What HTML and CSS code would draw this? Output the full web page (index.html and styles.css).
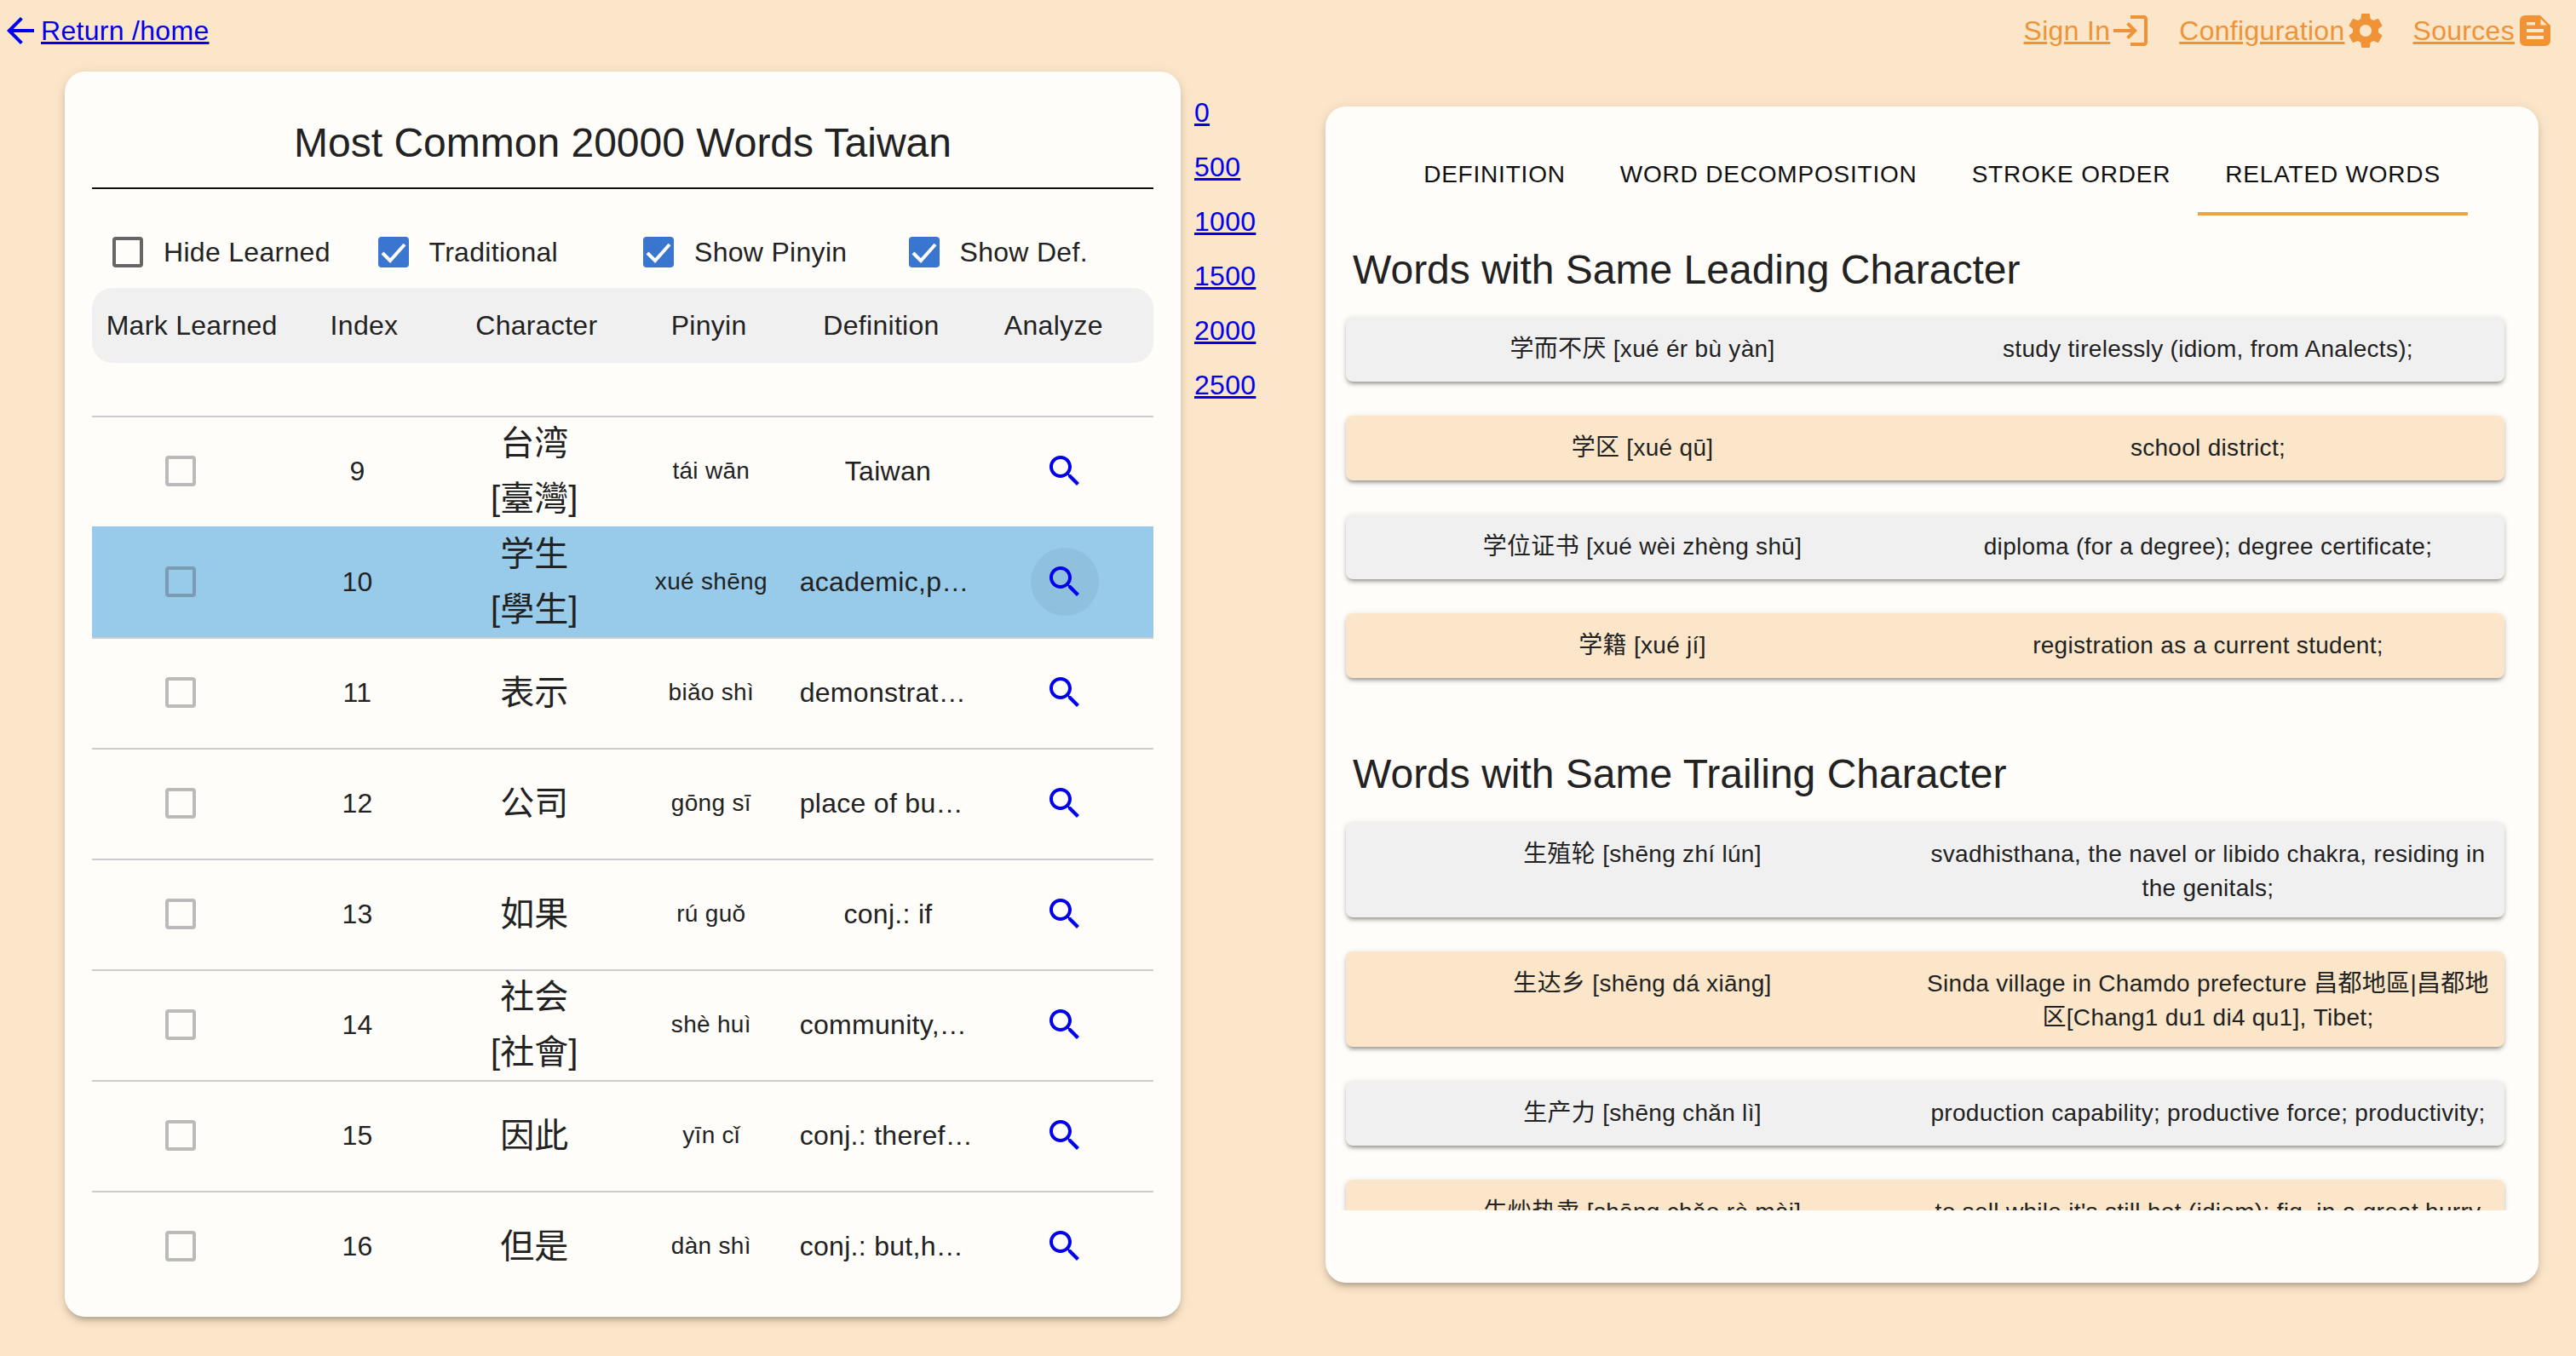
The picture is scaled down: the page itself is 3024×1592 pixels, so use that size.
FILE: index.html
```html
<!DOCTYPE html>
<html>
<head>
<meta charset="utf-8">
<title>Most Common 20000 Words Taiwan</title>
<link rel="stylesheet" href="styles.css">
</head>
<body>
<div class="topbar">
  <div class="back">
    <svg class="icon" viewBox="0 0 24 24"><path d="M20 11H7.830l5.590-5.590L12 4l-8 8 8 8 1.410-1.410L7.830 13H20v-2z"/></svg>
    <a href="#">Return /home</a>
  </div>
  <div class="nav">
    <div class="nav-item signin">
      <a href="#">Sign In</a>
      <svg class="icon" viewBox="0 0 24 24"><path d="M11 7L9.600 8.400l2.600 2.600H2v2h10.200l-2.600 2.600L11 17l5-5-5-5zm9 12h-8v2h8c1.100 0 2-.9 2-2V5c0-1.100-.9-2-2-2h-8v2h8v14z"/></svg>
    </div>
    <div class="nav-item config">
      <a href="#">Configuration</a>
      <svg class="icon" viewBox="0 0 24 24"><path d="M19.430 12.980c.04-.32.07-.64.07-.98s-.03-.66-.07-.98l2.110-1.650c.19-.15.24-.42.12-.64l-2-3.460c-.12-.22-.39-.3-.61-.22l-2.490 1c-.52-.4-1.080-.73-1.690-.98l-.38-2.650C14.460 2.180 14.250 2 14 2h-4c-.25 0-.46.18-.49.42l-.38 2.650c-.61.25-1.170.59-1.690.98l-2.490-1c-.23-.09-.49 0-.61.22l-2 3.460c-.13.22-.07.49.12.64l2.110 1.650c-.04.32-.07.65-.07.98s.03.66.07.98l-2.110 1.650c-.19.15-.24.42-.12.64l2 3.460c.12.22.39.3.61.22l2.490-1c.52.4 1.080.73 1.690.98l.38 2.650c.03.24.24.42.49.42h4c.25 0 .46-.18.49-.42l.38-2.650c.61-.25 1.170-.59 1.690-.98l2.490 1c.23.09.49 0 .61-.22l2-3.460c.12-.22.07-.49-.12-.64l-2.110-1.650zM12 15.500c-1.930 0-3.500-1.570-3.500-3.500s1.570-3.500 3.500-3.500 3.500 1.570 3.500 3.500-1.570 3.500-3.500 3.500z"/></svg>
    </div>
    <div class="nav-item">
      <a href="#">Sources</a>
      <svg class="doc" viewBox="0 0 36 36"><path fill-rule="evenodd" d="M6 0h18l12 12v18a6 6 0 0 1-6 6H6a6 6 0 0 1-6-6V6a6 6 0 0 1 6-6zM24.500 4v7.500H32zM8 8v3.500h10V8zM8 16v4h20v-4zM8 24v4h20v-4z"/></svg>
    </div>
  </div>
</div>

<div class="main">
  <div class="card words">
    <h2 class="title">Most Common 20000 Words Taiwan</h2>
    <div class="options">
      <label class="opt"><span class="box"></span>Hide Learned</label>
      <label class="opt"><span class="box on"><svg viewBox="0 0 36 36"><path d="M5 19l9 9 17-19" /></svg></span>Traditional</label>
      <label class="opt"><span class="box on"><svg viewBox="0 0 36 36"><path d="M5 19l9 9 17-19" /></svg></span>Show Pinyin</label>
      <label class="opt"><span class="box on"><svg viewBox="0 0 36 36"><path d="M5 19l9 9 17-19" /></svg></span>Show Def.</label>
    </div>
    <div class="thead">
      <div>Mark Learned</div><div>Index</div><div>Character</div><div>Pinyin</div><div>Definition</div><div>Analyze</div>
    </div>
    <div class="rows">
      <div class="row">
        <div><span class="cb"></span></div><div>9</div>
        <div class="ch">台湾<br>[臺灣]</div><div class="py">tái wān</div>
        <div class="def">Taiwan</div>
        <div><span class="find"><svg viewBox="0 0 24 24"><path d="M15.500 14h-.79l-.28-.27C15.410 12.590 16 11.110 16 9.500 16 5.910 13.090 3 9.500 3S3 5.910 3 9.500 5.910 16 9.500 16c1.610 0 3.090-.59 4.230-1.570l.27.28v.79l5 4.990L20.490 19l-4.990-5zm-6 0C7.010 14 5 11.990 5 9.500S7.010 5 9.500 5 14 7.010 14 9.500 11.990 14 9.500 14z"/></svg></span></div>
      </div>
      <div class="row active">
        <div><span class="cb"></span></div><div>10</div>
        <div class="ch">学生<br>[學生]</div><div class="py">xué shēng</div>
        <div class="def cut">academic,p…</div>
        <div><span class="find"><svg viewBox="0 0 24 24"><path d="M15.500 14h-.79l-.28-.27C15.410 12.590 16 11.110 16 9.500 16 5.910 13.090 3 9.500 3S3 5.910 3 9.500 5.910 16 9.500 16c1.610 0 3.090-.59 4.230-1.570l.27.28v.79l5 4.990L20.490 19l-4.990-5zm-6 0C7.010 14 5 11.990 5 9.500S7.010 5 9.500 5 14 7.010 14 9.500 11.990 14 9.500 14z"/></svg></span></div>
      </div>
      <div class="row">
        <div><span class="cb"></span></div><div>11</div>
        <div class="ch">表示</div><div class="py">biǎo shì</div>
        <div class="def cut">demonstrat…</div>
        <div><span class="find"><svg viewBox="0 0 24 24"><path d="M15.500 14h-.79l-.28-.27C15.410 12.590 16 11.110 16 9.500 16 5.910 13.090 3 9.500 3S3 5.910 3 9.500 5.910 16 9.500 16c1.610 0 3.090-.59 4.230-1.570l.27.28v.79l5 4.990L20.490 19l-4.990-5zm-6 0C7.010 14 5 11.990 5 9.500S7.010 5 9.500 5 14 7.010 14 9.500 11.990 14 9.500 14z"/></svg></span></div>
      </div>
      <div class="row">
        <div><span class="cb"></span></div><div>12</div>
        <div class="ch">公司</div><div class="py">gōng sī</div>
        <div class="def cut">place of bu…</div>
        <div><span class="find"><svg viewBox="0 0 24 24"><path d="M15.500 14h-.79l-.28-.27C15.410 12.590 16 11.110 16 9.500 16 5.910 13.090 3 9.500 3S3 5.910 3 9.500 5.910 16 9.500 16c1.610 0 3.090-.59 4.230-1.570l.27.28v.79l5 4.990L20.490 19l-4.990-5zm-6 0C7.010 14 5 11.990 5 9.500S7.010 5 9.500 5 14 7.010 14 9.500 11.990 14 9.500 14z"/></svg></span></div>
      </div>
      <div class="row">
        <div><span class="cb"></span></div><div>13</div>
        <div class="ch">如果</div><div class="py">rú guǒ</div>
        <div class="def">conj.: if</div>
        <div><span class="find"><svg viewBox="0 0 24 24"><path d="M15.500 14h-.79l-.28-.27C15.410 12.590 16 11.110 16 9.500 16 5.910 13.090 3 9.500 3S3 5.910 3 9.500 5.910 16 9.500 16c1.610 0 3.090-.59 4.230-1.570l.27.28v.79l5 4.990L20.490 19l-4.990-5zm-6 0C7.010 14 5 11.990 5 9.500S7.010 5 9.500 5 14 7.010 14 9.500 11.990 14 9.500 14z"/></svg></span></div>
      </div>
      <div class="row">
        <div><span class="cb"></span></div><div>14</div>
        <div class="ch">社会<br>[社會]</div><div class="py">shè huì</div>
        <div class="def cut">community,…</div>
        <div><span class="find"><svg viewBox="0 0 24 24"><path d="M15.500 14h-.79l-.28-.27C15.410 12.590 16 11.110 16 9.500 16 5.910 13.090 3 9.500 3S3 5.910 3 9.500 5.910 16 9.500 16c1.610 0 3.090-.59 4.230-1.570l.27.28v.79l5 4.990L20.490 19l-4.990-5zm-6 0C7.010 14 5 11.990 5 9.500S7.010 5 9.500 5 14 7.010 14 9.500 11.990 14 9.500 14z"/></svg></span></div>
      </div>
      <div class="row">
        <div><span class="cb"></span></div><div>15</div>
        <div class="ch">因此</div><div class="py">yīn cǐ</div>
        <div class="def cut">conj.: theref…</div>
        <div><span class="find"><svg viewBox="0 0 24 24"><path d="M15.500 14h-.79l-.28-.27C15.410 12.590 16 11.110 16 9.500 16 5.910 13.090 3 9.500 3S3 5.910 3 9.500 5.910 16 9.500 16c1.610 0 3.090-.59 4.230-1.570l.27.28v.79l5 4.990L20.490 19l-4.990-5zm-6 0C7.010 14 5 11.990 5 9.500S7.010 5 9.500 5 14 7.010 14 9.500 11.990 14 9.500 14z"/></svg></span></div>
      </div>
      <div class="row">
        <div><span class="cb"></span></div><div>16</div>
        <div class="ch">但是</div><div class="py">dàn shì</div>
        <div class="def cut">conj.: but,h…</div>
        <div><span class="find"><svg viewBox="0 0 24 24"><path d="M15.500 14h-.79l-.28-.27C15.410 12.590 16 11.110 16 9.500 16 5.910 13.090 3 9.500 3S3 5.910 3 9.500 5.910 16 9.500 16c1.610 0 3.090-.59 4.230-1.570l.27.28v.79l5 4.990L20.490 19l-4.990-5zm-6 0C7.010 14 5 11.990 5 9.500S7.010 5 9.500 5 14 7.010 14 9.500 11.990 14 9.500 14z"/></svg></span></div>
      </div>
    </div>
  </div>

  <div class="pages">
    <a href="#">0</a><a href="#">500</a><a href="#">1000</a><a href="#">1500</a><a href="#">2000</a><a href="#">2500</a>
  </div>

  <div class="card detail">
    <div class="tabs">
      <div class="tab">DEFINITION</div>
      <div class="tab">WORD DECOMPOSITION</div>
      <div class="tab">STROKE ORDER</div>
      <div class="tab selected">RELATED WORDS</div>
    </div>
    <div class="scroll">
      <h2 class="sub">Words with Same Leading Character</h2>
      <div class="item"><div>学而不厌 [xué ér bù yàn]</div><div>study tirelessly (idiom, from Analects);</div></div>
      <div class="item alt"><div>学区 [xué qū]</div><div>school district;</div></div>
      <div class="item"><div>学位证书 [xué wèi zhèng shū]</div><div>diploma (for a degree); degree certificate;</div></div>
      <div class="item alt"><div>学籍 [xué jí]</div><div>registration as a current student;</div></div>
      <h2 class="sub second">Words with Same Trailing Character</h2>
      <div class="item"><div>生殖轮 [shēng zhí lún]</div><div>svadhisthana, the navel or libido chakra, residing in the genitals;</div></div>
      <div class="item alt"><div>生达乡 [shēng dá xiāng]</div><div>Sinda village in Chamdo prefecture 昌都地區|昌都地区[Chang1 du1 di4 qu1], Tibet;</div></div>
      <div class="item"><div>生产力 [shēng chǎn lì]</div><div>production capability; productive force; productivity;</div></div>
      <div class="item alt"><div>生炒热卖 [shēng chǎo rè mài]</div><div>to sell while it's still hot (idiom); fig. in a great hurry</div></div>
    </div>
  </div>
</div>
</body>
</html>
```
FILE: styles.css
```css
*{box-sizing:border-box;}
html,body{margin:0;padding:0;}
body{width:3024px;height:1592px;overflow:hidden;background:#fce6c9;color:#222;font-family:"Liberation Sans","Noto Sans CJK SC",sans-serif;font-size:32px;letter-spacing:.3px;}
a{color:#00e;text-decoration:underline;}

.topbar{display:flex;justify-content:space-between;height:72px;padding:12px 30px 0 0;}
.back,.nav,.nav-item{display:flex;align-items:flex-start;}
.icon{width:48px;height:48px;flex:none;}
.back .icon{fill:#00e;}
.back a,.nav-item a{line-height:48px;}
.nav-item{margin-left:32px;}
.nav-item.config{margin-left:33px;}
.nav-item a{color:#f09337;}
.nav-item svg{fill:#f09337;}
.doc{width:36px;height:36px;margin:6px 0 0 6px;}

.main{display:flex;align-items:flex-start;padding-left:76px;}
.card{background:#fffdfa;border-radius:24px;box-shadow:0 6px 6px -4px rgba(0,0,0,.2),0 6px 8px rgba(0,0,0,.1),0 2px 16px rgba(0,0,0,.08);}

.words{width:1310px;height:1462px;margin-top:12px;padding:0 32px;}
.title{margin:0;height:138px;padding-top:58px;border-bottom:2px solid #111;font-size:48px;font-weight:400;line-height:52px;letter-spacing:0;text-align:center;}
.options{display:grid;grid-template-columns:repeat(4,1fr);height:116px;align-items:center;padding-top:32px;}
.opt{display:flex;align-items:center;padding-left:24px;}
.box{width:36px;height:36px;margin-right:24px;border:4px solid #666;border-radius:4px;flex:none;}
.box.on{background:#3a76d0;border:0;}
.box svg{display:block;width:36px;height:36px;fill:none;stroke:#fff;stroke-width:4;}
.thead{display:grid;grid-template-columns:repeat(6,1fr);height:88px;padding:0 16px;align-items:center;background:#f0f0f0;border-radius:24px;text-align:center;}

.rows{margin-top:62px;}
.row{display:grid;grid-template-columns:repeat(6,1fr);grid-template-rows:minmax(0,1fr);height:130px;padding-bottom:2px;align-items:center;border-top:2px solid #ccc;text-align:center;}
.row>div{min-width:0;}
.row.active{background:#97cbe9;border-top-color:#97cbe9;}
.cb{display:inline-block;width:36px;height:36px;margin-bottom:2px;border:4px solid #bbb;border-radius:4px;vertical-align:middle;}
.active .cb{border-color:#7b9db4;}
.ch{font-size:40px;line-height:65px;letter-spacing:0;}
.py{font-size:28px;}
.def{white-space:nowrap;}
.def.cut{text-align:left;}
.find{display:inline-flex;align-items:center;justify-content:center;width:80px;height:80px;border-radius:50%;vertical-align:middle;}
.active .find{background:rgba(0,0,0,.05);}
.find svg{width:48px;height:48px;fill:#00e;}

.pages{display:flex;flex-direction:column;width:154px;margin:28px 0 0 16px;}
.pages a{height:64px;line-height:64px;align-self:flex-start;}

.detail{width:1424px;height:1381px;margin-top:53px;padding-top:32px;}
.tabs{display:flex;justify-content:center;height:96px;}
.tab{display:flex;align-items:center;padding:0 32px;font-size:28px;letter-spacing:.8px;color:#111;}
.tab.selected{box-shadow:inset 0 -4px 0 #f0a33a;}
.scroll{height:1168px;padding:0 40px 0 24px;overflow:hidden;}
.sub{margin:0 0 0 8px;height:119px;padding-top:36px;font-size:48px;font-weight:400;line-height:56px;letter-spacing:0;}
.second{height:129px;padding-top:45px;}
.item{display:grid;grid-template-columns:1fr 1fr;min-height:76px;padding:18px 16px 14px;margin-bottom:40px;border-radius:8px;background:#f0f0f1;font-size:28px;line-height:40px;text-align:center;box-shadow:0 4px 4px -2px rgba(0,0,0,.3),0 3px 6px rgba(0,0,0,.14),0 1px 10px rgba(0,0,0,.06);}
.item.alt{background:#fce6c9;}
```
